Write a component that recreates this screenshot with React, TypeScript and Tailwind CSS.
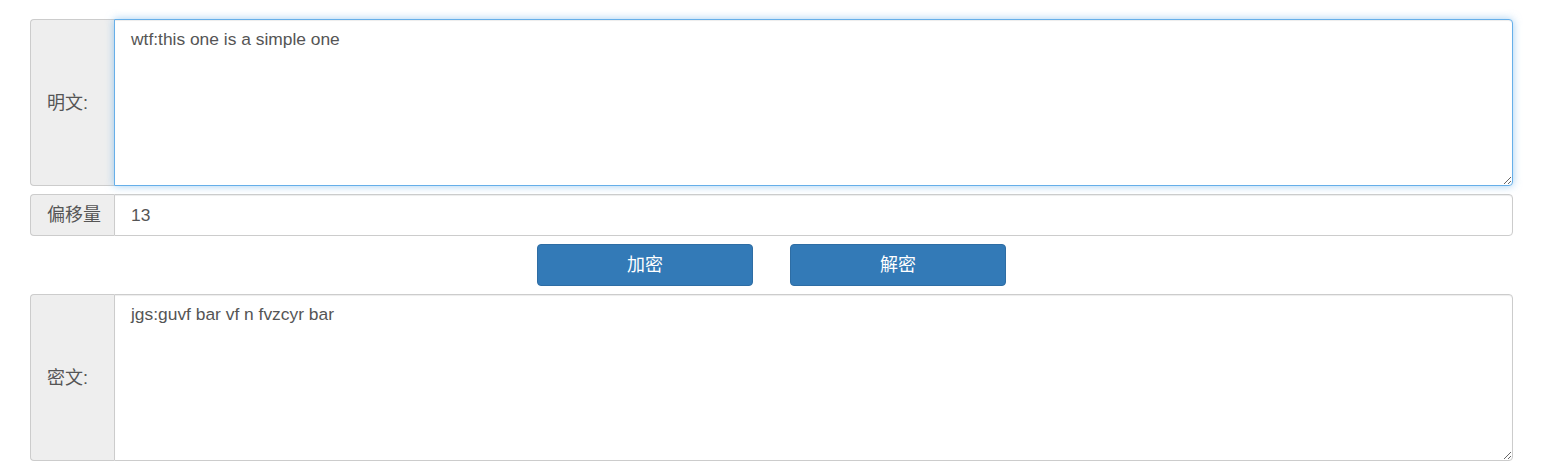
import React from "react";

const font = "font-['Liberation_Sans','Noto_Sans_CJK_SC',sans-serif]";

function Addon({ label, items }: { label: string; items?: string }) {
  return (
    <div
      className={`flex w-[84px] shrink-0 ${items ?? "items-center"} rounded-l-[4px] border border-r-0 border-[#ccc] bg-[#eee] pl-4 text-[18px] leading-[24px] text-[#555]`}
    >
      {label}
    </div>
  );
}

export default function App() {
  return (
    <div className={`${font} min-h-[463px] bg-white pt-[19px] pl-[30px] pr-[46px]`}>
      <div className="flex w-[1483px] flex-col gap-2">
        <div className="flex h-[167px]">
          <Addon label="明文:" />
          <textarea
            readOnly
            defaultValue="wtf:this one is a simple one"
            className={`${font} relative z-10 h-[167px] flex-1 rounded-r-[4px] border border-[#66afe9] bg-white px-4 pt-[7px] pb-2 text-[17.4px] leading-[24px] text-[#555] shadow-[inset_0_1px_1px_rgba(0,0,0,0.075),0_0_8px_rgba(102,175,233,0.6)] outline-none`}
          />
        </div>
        <div className="flex h-[42px]">
          <Addon label="偏移量" />
          <input
            readOnly
            defaultValue="13"
            className={`${font} h-[42px] flex-1 rounded-r-[4px] border border-[#ccc] bg-white px-4 text-[17.4px] leading-[24px] text-[#555] shadow-[inset_0_1px_1px_rgba(0,0,0,0.075)] outline-none`}
          />
        </div>
        <div className="flex h-[42px] justify-center gap-[37px]">
          <button className={`${font} h-[42px] w-[216px] rounded-[4px] border border-[#2e6da4] bg-[#337ab7] text-[18px] text-white`}>
            加密
          </button>
          <button className={`${font} h-[42px] w-[216px] rounded-[4px] border border-[#2e6da4] bg-[#337ab7] text-[18px] text-white`}>
            解密
          </button>
        </div>
        <div className="flex h-[167px]">
          <Addon label="密文:" />
          <textarea
            readOnly
            defaultValue="jgs:guvf bar vf n fvzcyr bar"
            className={`${font} h-[167px] flex-1 rounded-r-[4px] border border-[#ccc] bg-white px-4 pt-[7px] pb-2 text-[17.4px] leading-[24px] text-[#555] shadow-[inset_0_1px_1px_rgba(0,0,0,0.075)] outline-none`}
          />
        </div>
      </div>
    </div>
  );
}
